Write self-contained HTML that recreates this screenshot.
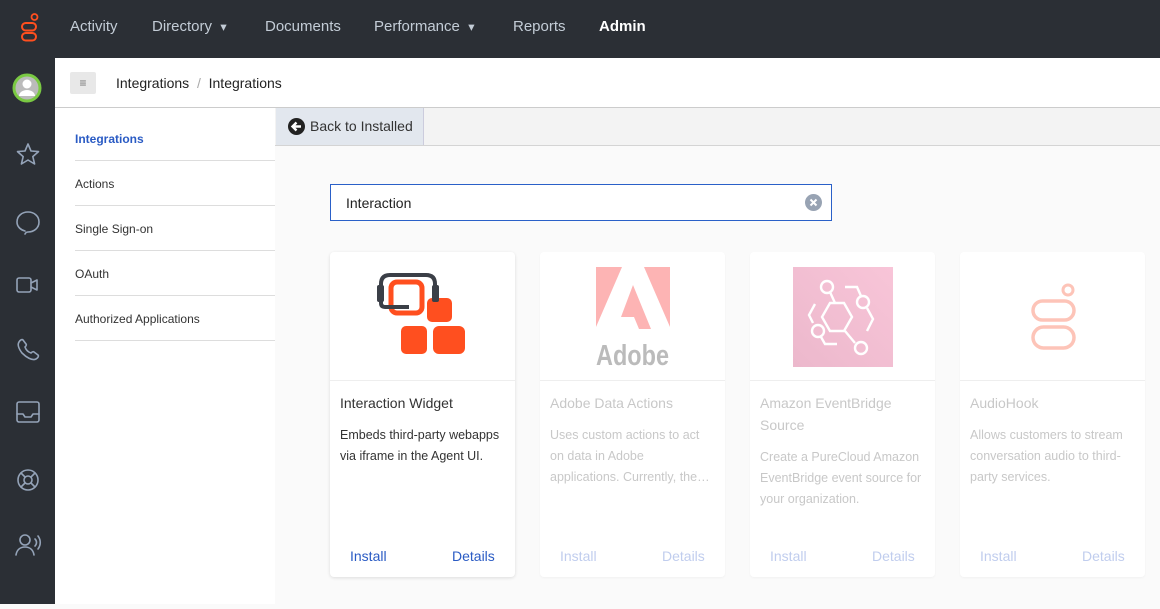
<!DOCTYPE html>
<html><head><style>
*{box-sizing:border-box;margin:0;padding:0}
body{width:1160px;height:604px;overflow:hidden;font-family:"Liberation Sans",sans-serif;background:#fafafa;position:relative;color:#333}
.top{position:absolute;left:0;top:0;width:1160px;height:58px;background:#2b2f35}
.top span{position:absolute;top:18px;font-size:15px;color:#c3ccd6}
.side{position:absolute;left:0;top:58px;width:55px;height:546px;background:#2b2f35}
.crumb{position:absolute;left:55px;top:58px;width:1105px;height:50px;background:#fff;border-bottom:1px solid #ccc}
.nav{position:absolute;left:55px;top:108px;width:220px;height:496px;background:#fff}
.nav div{margin-left:20px;height:45px;border-bottom:1px solid #ddd;font-size:12px;line-height:46px;color:#333}
.strip{position:absolute;left:275px;top:108px;width:885px;height:38px;background:#f3f3f3;border-bottom:1px solid #d4d4d4}
.back{position:absolute;left:276px;top:108px;width:148px;height:37px;background:#e2e7ee;border-right:1px solid #ccd;font-size:14px;color:#333;line-height:37px;padding-left:34px}
.search{position:absolute;left:330px;top:184px;width:502px;height:37px;border:1px solid #2a60c8;background:#fff;font-size:14px;line-height:37px;padding-left:15px;color:#222}
.card{position:absolute;top:252px;width:185px;height:325px;background:#fff;border-radius:4px;box-shadow:0 1px 3px rgba(0,0,0,.12)}
.card .img{height:129px;border-bottom:1px solid #eee;position:relative}
.card h3{font-weight:normal;font-size:14px;margin:11px 10px 0;line-height:22px;color:#333}
.card p{font-size:12.5px;line-height:21px;margin:11px 10px 0;color:#333}
.card .b{position:absolute;top:296px;font-size:14px;color:#2a5bc4}
.dim h3,.dim p{color:#c8c8c8}.dim .b{color:#c0cdee}
.dim{box-shadow:0 1px 2px rgba(0,0,0,.04)}
</style></head><body>
<div class="top">
<svg style="position:absolute;left:20px;top:13px" width="20" height="30" viewBox="0 0 20 30"><circle cx="14.5" cy="4" r="3" fill="none" stroke="#ff4f1f" stroke-width="1.8"/><rect x="2" y="10" width="14" height="7.5" rx="3.7" fill="none" stroke="#ff4f1f" stroke-width="2"/><rect x="2" y="20" width="14" height="7.5" rx="3.7" fill="none" stroke="#ff4f1f" stroke-width="2"/></svg>
<span style="left:70px">Activity</span><span style="left:152px">Directory&nbsp;&nbsp;<small>▾</small></span><span style="left:265px">Documents</span><span style="left:374px">Performance&nbsp;&nbsp;<small>▾</small></span><span style="left:513px">Reports</span><span style="left:599px;color:#fff;font-weight:bold">Admin</span>
</div>
<div class="side">
<svg width="55" height="546" fill="none" stroke="#94a3b8" stroke-width="1.6" stroke-linejoin="round" stroke-linecap="round">
<circle cx="27" cy="30" r="13" fill="#bbb" stroke="#7ac943" stroke-width="3"/><circle cx="27" cy="26" r="4.5" fill="#fff" stroke="none"/><path d="M19 38a8 6 0 0 1 16 0" fill="#fff" stroke="none"/>
<path d="M28 86l3 7 7.5.6-5.7 5 1.8 7.4L28 102l-6.6 4 1.8-7.4-5.7-5 7.5-.6z"/>
<path d="M25 173c-4-1-8-4-8-9 0-6 5-10 11-10s11 4 11 10-5 10-11 10c-1 0-2 0-3 2"/>
<rect x="17" y="220" width="14" height="14" rx="2"/><path d="M31 225l6-3v10l-6-3"/>
<path d="M19 284c1-2 3-3 4-2l3 4c1 1 0 2-1 3 1 3 3 5 6 6 1-1 2-2 3-1l4 3c1 1 0 3-2 4-4 2-10-2-14-6-3-4-5-8-3-11z"/>
<rect x="17" y="344" width="22" height="20" rx="2"/><path d="M17 356h6l2 3h6l2-3h6"/>
<circle cx="28" cy="422" r="10"/><circle cx="28" cy="422" r="4"/><path d="M21 415l4 4M35 415l-4 4M21 429l4-4M35 429l-4-4"/>
<circle cx="25" cy="482" r="5"/><path d="M16 497c1-6 5-8 9-8s8 2 9 8"/><path d="M35 481c2 2 2 5 0 7M38 478c3 4 3 9 0 13"/>
</svg></div>
<div class="crumb">
<div style="position:absolute;left:15px;top:14px;width:26px;height:22px;background:#e8e8e8;border-radius:2px;font-size:12px;color:#777;text-align:center;line-height:22px">≡</div>
<span style="position:absolute;left:61px;top:17px;font-size:14px;color:#222">Integrations <span style="color:#aaa">&nbsp;/&nbsp;</span> Integrations</span>
</div>
<div class="nav">
<div style="color:#2a5bc4;font-weight:bold;margin-top:8px">Integrations</div><div>Actions</div><div>Single Sign-on</div><div>OAuth</div><div>Authorized Applications</div>
</div>
<div class="strip"></div>
<div class="back"><svg style="position:absolute;left:12px;top:10px" width="17" height="17" viewBox="0 0 17 17"><circle cx="8.5" cy="8.5" r="8.5" fill="#222"/><path d="M13 8.5H5M8.5 4.5l-4 4 4 4" stroke="#fff" stroke-width="2.4" fill="none"/></svg>Back to Installed</div>
<div class="search">Interaction<svg style="position:absolute;right:9px;top:9px" width="17" height="17"><circle cx="8.5" cy="8.5" r="8.5" fill="#98a3b3"/><path d="M5.5 5.5l6 6M11.5 5.5l-6 6" stroke="#fff" stroke-width="2"/></svg></div>

<div class="card" style="left:330px"><div class="img"><svg style="position:absolute;left:46px;top:18px" width="92" height="88" viewBox="0 0 92 88">
<rect x="15" y="12" width="31" height="31" rx="6" fill="none" stroke="#ff4f1f" stroke-width="5"/>
<rect x="51" y="28" width="25" height="24" rx="5" fill="#ff4f1f"/><rect x="25" y="56" width="26" height="28" rx="5" fill="#ff4f1f"/><rect x="57" y="56" width="32" height="28" rx="6" fill="#ff4f1f"/>
<path d="M5 22V14Q5 5 14 5H50Q59 5 59 14V22" fill="none" stroke="#3b3f47" stroke-width="4"/>
<rect x="1" y="15" width="7" height="17" rx="2" fill="#3b3f47"/><rect x="56" y="15" width="7" height="17" rx="2" fill="#3b3f47"/><path d="M5 30v3q0 4 4 4h24" stroke="#3b3f47" stroke-width="4" fill="none"/>
</svg></div><h3>Interaction Widget</h3><p>Embeds third-party webapps via iframe in the Agent UI.</p><span class="b" style="left:20px">Install</span><span class="b" style="left:122px">Details</span></div>

<div class="card dim" style="left:540px"><div class="img"><svg style="position:absolute;left:56px;top:15px" width="80" height="102"><path d="M0 0h26L0 60zM48 0h26v60zM37 18l18 44H43l-5-12h-13z" fill="#fdb4b4"/><text x="0" y="98" font-family="Liberation Sans" font-weight="bold" font-size="29" fill="#bbb" textLength="73" lengthAdjust="spacingAndGlyphs">Adobe</text></svg></div><h3>Adobe Data Actions</h3><p>Uses custom actions to act on data in Adobe applications. Currently, the…</p><span class="b" style="left:20px">Install</span><span class="b" style="left:122px">Details</span></div>

<div class="card dim" style="left:750px"><div class="img"><svg style="position:absolute;left:43px;top:15px" width="100" height="100"><defs><linearGradient id="g" x1="1" y1="0" x2="0" y2="1"><stop offset="0" stop-color="#f8c5d8"/><stop offset="1" stop-color="#ecb8cc"/></linearGradient></defs><rect width="100" height="100" fill="url(#g)"/><g fill="none" stroke="#fff" stroke-width="2.4"><path d="M37 36h14l8 14-8 14H37l-8-14z"/><circle cx="34" cy="20" r="6"/><circle cx="70" cy="35" r="6"/><circle cx="25" cy="64" r="6"/><circle cx="68" cy="81" r="6"/><path d="M37 25l5 11M52 64l10 12M52 20h12l4 9M28 70l4 7h12M22 37l-6 11 4 8M74 41l6 11-6 12"/></g></svg></div><h3>Amazon EventBridge Source</h3><p>Create a PureCloud Amazon EventBridge event source for your organization.</p><span class="b" style="left:20px">Install</span><span class="b" style="left:122px">Details</span></div>

<div class="card dim" style="left:960px"><div class="img"><svg style="position:absolute;left:70px;top:30px" width="46" height="72"><circle cx="38" cy="8" r="5" fill="none" stroke="#fdc4b8" stroke-width="3"/><rect x="3" y="19" width="41" height="19" rx="9.5" fill="none" stroke="#fdc4b8" stroke-width="3.5"/><rect x="3" y="45" width="41" height="21" rx="10.5" fill="none" stroke="#fdc4b8" stroke-width="3.5"/></svg></div><h3>AudioHook</h3><p>Allows customers to stream conversation audio to third-party services.</p><span class="b" style="left:20px">Install</span><span class="b" style="left:122px">Details</span></div>
</body></html>
